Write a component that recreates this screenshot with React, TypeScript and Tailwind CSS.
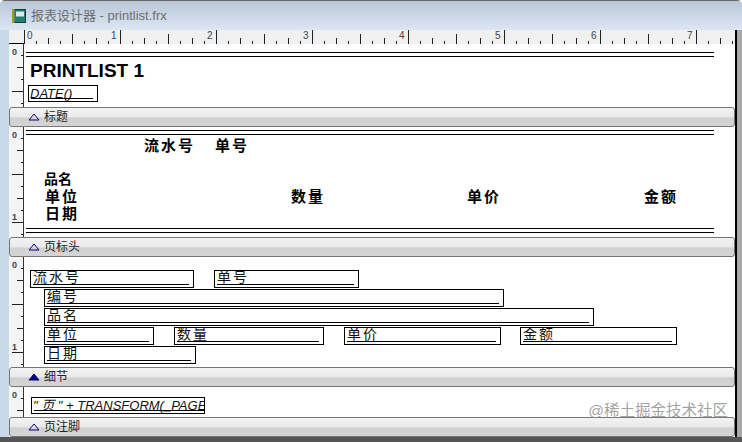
const cjk = "font-['Liberation_Sans','Noto_Sans_CJK_SC',sans-serif]";

type Field = { text: string; x: number; y: number; w: number; line: number; italic?: boolean };
type Label = { text: string; x: number; y: number; size?: string };

const sections: {
  height: number;
  band: string;
  filled?: boolean;
  topRule?: number;
  bottomRule?: number;
  fields?: Field[];
  labels?: Label[];
}[] = [
  {
    height: 63,
    band: "标题",
    topRule: 9,
    fields: [{ text: "DATE()", x: 4, y: 41, w: 70, line: 62, italic: true }],
  },
  {
    height: 110,
    band: "页标头",
    topRule: 4,
    bottomRule: 102,
    labels: [
      { text: "流水号", x: 120, y: 11 },
      { text: "单号", x: 191, y: 11 },
      { text: "品名", x: 20, y: 45, size: "text-[14px] tracking-[0px]" },
      { text: "单位", x: 21, y: 62 },
      { text: "数量", x: 267, y: 62 },
      { text: "单价", x: 443, y: 62 },
      { text: "金额", x: 620, y: 62 },
      { text: "日期", x: 21, y: 79 },
    ],
  },
  {
    height: 110,
    band: "细节",
    filled: true,
    fields: [
      { text: "流水号", x: 6, y: 13, w: 164, line: 156 },
      { text: "单号", x: 190, y: 13, w: 145, line: 137 },
      { text: "编号", x: 20, y: 32, w: 460, line: 452 },
      { text: "品名", x: 20, y: 51, w: 550, line: 542 },
      { text: "单位", x: 20, y: 70, w: 110, line: 102 },
      { text: "数量", x: 150, y: 70, w: 150, line: 142 },
      { text: "单价", x: 320, y: 70, w: 157, line: 149 },
      { text: "金额", x: 496, y: 70, w: 157, line: 149 },
      { text: "日期", x: 20, y: 89, w: 152, line: 144 },
    ],
  },
  {
    height: 30,
    band: "页注脚",
    fields: [{ text: '" 页 " + TRANSFORM(_PAGE', x: 7, y: 10, w: 174, line: 172, italic: true }],
  },
];

function TopRuler() {
  const ticks = Array.from({ length: 60 }, (_, i) => i);
  return (
    <svg width="726" height="14" className="block">
      {ticks.map((i) => {
        const h = i % 8 === 0 ? 14 : i % 4 === 0 ? 10 : i % 2 === 0 ? 6 : 3;
        const x = 15.5 + i * 12;
        return x < 726 ? <line key={i} x1={x} x2={x} y1={14 - h} y2={14} stroke="#222" /> : null;
      })}
      <line x1="0" x2="15" y1="13.5" y2="13.5" stroke="#000" />
      {[0, 1, 2, 3, 4, 5, 6, 7].map((n) => (
        <text key={n} x={n === 0 ? 18 : 6 + n * 96} y={9} fontSize="10" fill="#444" fontFamily="Liberation Sans">
          {n}
        </text>
      ))}
    </svg>
  );
}

function SideRuler({ height }: { height: number }) {
  const ticks = Array.from({ length: Math.floor(height / 12) }, (_, i) => i + 1);
  return (
    <div className="w-[15px] shrink-0 bg-[#f4f4f4]" style={{ height }}>
      <svg width="15" height={height} className="block">
        {ticks.map((i) => {
          const y = i * 12 - 0.5;
          const w = i % 4 === 0 ? 12 : i % 2 === 0 ? 7 : 3;
          return <line key={i} x1={15 - w} x2={15} y1={y} y2={y} stroke="#222" />;
        })}
        <line x1="14.5" x2="14.5" y1="0" y2={height} stroke="#333" />
        <text x="3" y="11" fontSize="9" fontWeight="bold" fill="#444" fontFamily="Liberation Sans">
          0
        </text>
        {height > 96 && (
          <text x="3" y="93" fontSize="9" fontWeight="bold" fill="#444" fontFamily="Liberation Sans">
            1
          </text>
        )}
      </svg>
    </div>
  );
}

function Band({ label, filled }: { label: string; filled?: boolean }) {
  return (
    <div className="flex h-5 w-[726px] items-center rounded-[3px] border border-[#777] bg-[linear-gradient(#f3f3f3_0%,#e9e9e9_50%,#d0d0d0_55%,#d4d4d4_100%)] pl-[18px]">
      <svg width="12" height="8" viewBox="0 0 12 8">
        <path d="M6 1 L11 7 L1 7 Z" fill={filled ? "#000080" : "none"} stroke="#000080" />
      </svg>
      <span className={`${cjk} ml-[4px] text-xs leading-none text-[#222]`}>{label}</span>
    </div>
  );
}

function DoubleRule({ y }: { y: number }) {
  return <div className="absolute left-[2px] h-[5px] w-[688px] border-y border-black" style={{ top: y }} />;
}

export default function App() {
  return (
    <div className={`${cjk} flex h-[442px] w-[742px] flex-col overflow-hidden rounded-t-[5px] bg-[#c9d9ea]`}>
      <div className="flex h-[30px] shrink-0 items-center gap-[5px] border-t border-[#666] bg-[linear-gradient(#b9c6d6,#dbe7f3)] pl-3">
        <svg width="14" height="14" viewBox="0 0 14 14">
          <rect x="0.5" y="0.5" width="13" height="13" fill="#1f7f6e" stroke="#234" />
          <rect x="4" y="2.5" width="8" height="5" fill="#d7ecec" />
          <rect x="0" y="0" width="2.5" height="14" fill="#9a9a2a" />
        </svg>
        <span className="text-[13px] text-[#6e6e6e]">报表设计器 - printlist.frx</span>
      </div>

      <div className="flex min-h-0 flex-1 pl-[9px]">
        <div className="w-[726px] shrink-0">
          <div className="h-[14px] bg-[#f0f0f0]">
            <TopRuler />
          </div>
          <div className="bg-white">
            {sections.map((s) => (
              <div key={s.band}>
                <div className="flex">
                  <SideRuler height={s.height} />
                  <div className="relative flex-1" style={{ height: s.height }}>
                    {s.topRule !== undefined && <DoubleRule y={s.topRule - 1} />}
                    {s.bottomRule !== undefined && <DoubleRule y={s.bottomRule - 1} />}
                    {s.labels?.map((l) => (
                      <span
                        key={l.text}
                        className={`absolute whitespace-nowrap font-bold leading-none text-black ${l.size ?? "text-[15px] tracking-[2px]"}`}
                        style={{ left: l.x, top: l.y }}
                      >
                        {l.text}
                      </span>
                    ))}
                    {s.band === "标题" && (
                      <span className="absolute left-[6px] top-[17px] whitespace-nowrap text-[19px] font-bold leading-[20px] text-black">
                        PRINTLIST 1
                      </span>
                    )}
                    {s.fields?.map((f) => (
                      <div
                        key={f.text}
                        className={`absolute overflow-hidden border border-black bg-white ${f.italic ? "h-[17px]" : "h-[18px]"}`}
                        style={{ left: f.x, top: f.y, width: f.w }}
                      >
                        <span
                          className={`absolute whitespace-nowrap leading-[15px] text-[#111] ${f.italic ? "left-px top-0 text-[13px] italic" : "left-[2px] -top-px text-sm tracking-[2px]"}`}
                        >
                          {f.text}
                        </span>
                        <div className="absolute bottom-[2px] left-[2px] h-px bg-black" style={{ width: f.line }} />
                      </div>
                    ))}
                  </div>
                </div>
                <Band label={s.band} filled={s.filled} />
              </div>
            ))}
          </div>
        </div>
        <div className="flex-1 border-l-2 border-black bg-[#a9a9a9]" />
      </div>

      <div className="relative">
        <span className="absolute bottom-[15px] right-[14px] whitespace-nowrap text-[15.5px] text-[#8a8a8a]/80">@稀土掘金技术社区</span>
      </div>
      <div className="h-[5px] shrink-0 bg-[#555]" />
    </div>
  );
}
